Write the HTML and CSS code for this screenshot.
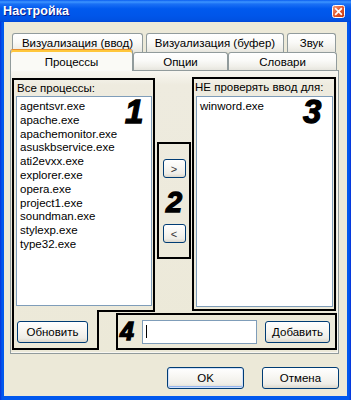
FILE: index.html
```html
<!DOCTYPE html>
<html>
<head>
<meta charset="utf-8">
<link rel="stylesheet" href="styles.css">
</head>
<body>
<div class="win">
  <div class="titlebar">
    <span class="title">Настройка</span>
    <span class="close"><svg width="13" height="13" viewBox="0 0 13 13"><defs><linearGradient id="cg" x1="0" y1="0" x2="1" y2="1"><stop offset="0" stop-color="#F3A07E"/><stop offset="0.5" stop-color="#E2582E"/><stop offset="1" stop-color="#C0360E"/></linearGradient></defs><rect x="0.5" y="0.5" width="12" height="12" rx="2" fill="url(#cg)" stroke="#fff"/><path d="M3.8 3.8 L9.2 9.2 M9.2 3.8 L3.8 9.2" stroke="#fff" stroke-width="1.7" stroke-linecap="square"/></svg></span>
  </div>
  <div class="client">
    <div class="tabrow row1">
      <div class="tab t-vvod">Визуализация (ввод)</div>
      <div class="tab t-buf">Визуализация (буфер)</div>
      <div class="tab t-zvuk">Звук</div>
    </div>
    <div class="tabrow row2">
      <div class="tab active t-proc">Процессы</div>
      <div class="tab t-opt">Опции</div>
      <div class="tab t-dict">Словари</div>
    </div>
    <div class="panel">
      <div class="rowA">
        <div class="box box1top">
          <div class="lbl">Все процессы:</div>
          <div class="list l-all">
            <div>agentsvr.exe</div>
            <div>apache.exe</div>
            <div>apachemonitor.exe</div>
            <div>asuskbservice.exe</div>
            <div>ati2evxx.exe</div>
            <div>explorer.exe</div>
            <div>opera.exe</div>
            <div>project1.exe</div>
            <div>soundman.exe</div>
            <div>stylexp.exe</div>
            <div>type32.exe</div>
          </div>
          <span class="num n1">1</span>
        </div>
        <div class="box box2">
          <button class="btn arrow a1">&gt;</button>
          <span class="num n2">2</span>
          <button class="btn arrow a2">&lt;</button>
        </div>
        <div class="box box3">
          <div class="lbl">НЕ проверять ввод для:</div>
          <div class="list l-ex"><div>winword.exe</div></div>
          <span class="num n3">3</span>
        </div>
      </div>
      <div class="rowB">
        <div class="box box1bot"><button class="btn b-upd">Обновить</button></div>
        <div class="box box4">
          <span class="num n4">4</span>
          <div class="edit"><span class="caret"></span></div>
          <button class="btn b-add">Добавить</button>
        </div>
      </div>
    </div>
    <div class="footer">
      <button class="btn b-ok">OK</button>
      <button class="btn b-cancel">Отмена</button>
    </div>
  </div>
</div>
</body>
</html>
```

FILE: styles.css
```css
* { box-sizing: border-box; }
html, body { margin: 0; padding: 0; }
body {
  width: 351px;
  height: 400px;
  overflow: hidden;
  font-family: "Liberation Sans", Arial, sans-serif;
  font-size: 11.5px;
  color: #000;
  background: #fff;
}
.win {
  width: 351px;
  height: 400px;
  display: flex;
  flex-direction: column;
  background: linear-gradient(to right, #0831D9 0, #0058EE 2px, #0058EE 349px, #0831D9 351px);
}
.titlebar {
  height: 22px;
  flex: none;
  display: flex;
  align-items: center;
  justify-content: space-between;
  padding: 0 6px 0 3px;
  background: linear-gradient(180deg, #0A5DF0 0%, #3D95FF 9%, #1A70F5 18%, #0059EE 40%, #0056EA 70%, #0052E3 90%, #0046D8 100%);
}
.title {
  color: #fff;
  font-weight: 700;
  font-size: 12.5px;
  text-shadow: 1px 1px 0 #0A1E8A;
  letter-spacing: 0.1px;
}
.close { display: flex; margin-top: 1px; }
.client {
  flex: 1;
  margin: 0 4px 4px;
  background: #ECE9D8;
  padding: 11px 8px 0 6px;
  display: flex;
  flex-direction: column;
}
.tabrow { display: flex; flex: none; }
.row1 { height: 19px; padding-left: 2px; }
.row2 { height: 18px; align-items: flex-start; }
.tab {
  border: 1px solid #919B9C;
  border-bottom: 0;
  border-radius: 3px 3px 0 0;
  background: linear-gradient(180deg, #FFFFFF 0%, #FAFAF8 45%, #F0EFE9 80%, #E6E5DE 100%);
  text-align: center;
  white-space: nowrap;
}
.row1 .tab { height: 19px; line-height: 18px; margin-right: 3px; }
.t-vvod { width: 131px; }
.t-buf { width: 138px; }
.t-zvuk { width: 49px; }
.row2 .tab { height: 18px; padding-top: 2px; line-height: 15px; }
.t-proc { width: 123px; }
.t-opt { width: 95px; }
.t-dict { width: 109px; }
.row2 .tab.active {
  height: 22px;
  margin-top: -3px;
  padding-top: 4px;
  line-height: 16px;
  border-top: 1px solid #E68B2C;
  box-shadow: inset 0 2px 0 #FFC73C;
  background: #FAFAF6;
  position: relative;
  z-index: 2;
}
.panel {
  width: 329px;
  height: 284px;
  flex: none;
  border: 1px solid #919B9C;
  padding: 6px 0 0 1px;
  background: linear-gradient(180deg, #F8F7F1 0, #EEEBDF 14px, #ECE9D8 100%);
  box-shadow: inset -1px -1px 0 #F8F7F2;
  position: relative;
}
.box { border: 2px solid #000; }
.rowA { display: flex; align-items: flex-start; height: 234px; }
.box1top {
  width: 143px;
  height: 232px;
  margin-top: 1px;
  border-bottom: 0;
  padding: 0 1px 0 2px;
  position: relative;
}
.box1top::after {
  content: "";
  position: absolute;
  left: 83px;
  right: -2px;
  top: 100%;
  height: 2px;
  background: #000;
}
.lbl { height: 16px; line-height: 16px; white-space: nowrap; padding-left: 1px; }
.list {
  background: #fff;
  border: 1px solid #7F9DB9;
  padding: 3px 0 0 3px;
  line-height: 13.8px;
  white-space: nowrap;
}
.l-all { width: 136px; height: 210px; }
.box2 {
  width: 34px;
  height: 117px;
  margin: 65px 1px 0 2px;
  display: flex;
  flex-direction: column;
  align-items: center;
}
.box3 {
  width: 144px;
  height: 234px;
  padding: 0 1px;
  position: relative;
}
.box3 .lbl { height: 17px; line-height: 17px; padding-left: 0; }
.l-ex { width: 137px; height: 211px; margin-left: 1px; }
.rowB { display: flex; align-items: flex-start; margin-top: -1px; }
.box1bot {
  width: 87px;
  height: 40px;
  border-top: 0;
  padding: 11px 0 0 3px;
}
.box4 {
  width: 221px;
  height: 37px;
  margin: 3px 0 0 17px;
  display: flex;
  align-items: center;
  padding-left: 2px;
}
.num {
  font-family: "Liberation Sans", Arial, sans-serif;
  font-weight: 700;
  font-style: italic;
  color: #000;
  -webkit-text-stroke: 1.3px #000;
  line-height: 1;
}
.n1 { position: absolute; left: 111px; top: 15px; font-size: 33px; }
.n3 { position: absolute; left: 109px; top: 16px; font-size: 33px; }
.n2 { font-size: 29px; line-height: 29px; height: 29px; margin-top: 10px; }
.n4 { font-size: 25px; width: 22px; flex: none; }
.edit {
  width: 115px;
  height: 24px;
  flex: none;
  border: 1px solid #7F9DB9;
  background: #fff;
  display: flex;
  align-items: center;
  padding-left: 3px;
}
.caret { width: 1px; height: 13px; background: #000; }
.btn {
  font-family: "Liberation Sans", Arial, sans-serif;
  font-size: 11.5px;
  color: #000;
  border: 1px solid #003C74;
  border-radius: 3px;
  background: linear-gradient(180deg, #FFFFFF 0%, #F7F6F2 45%, #EEEDE7 80%, #DCD7CC 100%);
  padding: 0;
  margin: 0;
  flex: none;
}
.arrow { width: 23px; height: 19px; font-size: 11px; color: #333; }
.a1 { margin-top: 15px; }
.a2 { margin-top: 7px; }
.b-upd { width: 71px; height: 22px; }
.b-add { width: 65px; height: 22px; margin-left: 8px; }
.footer {
  display: flex;
  justify-content: flex-end;
  gap: 18px;
  margin-top: 13px;
}
.b-ok, .b-cancel { width: 77px; height: 22px; }
.b-ok { box-shadow: inset 0 0 0 1px #CFE0FB, inset 0 -1px 0 1px #94B4EE; }
```
